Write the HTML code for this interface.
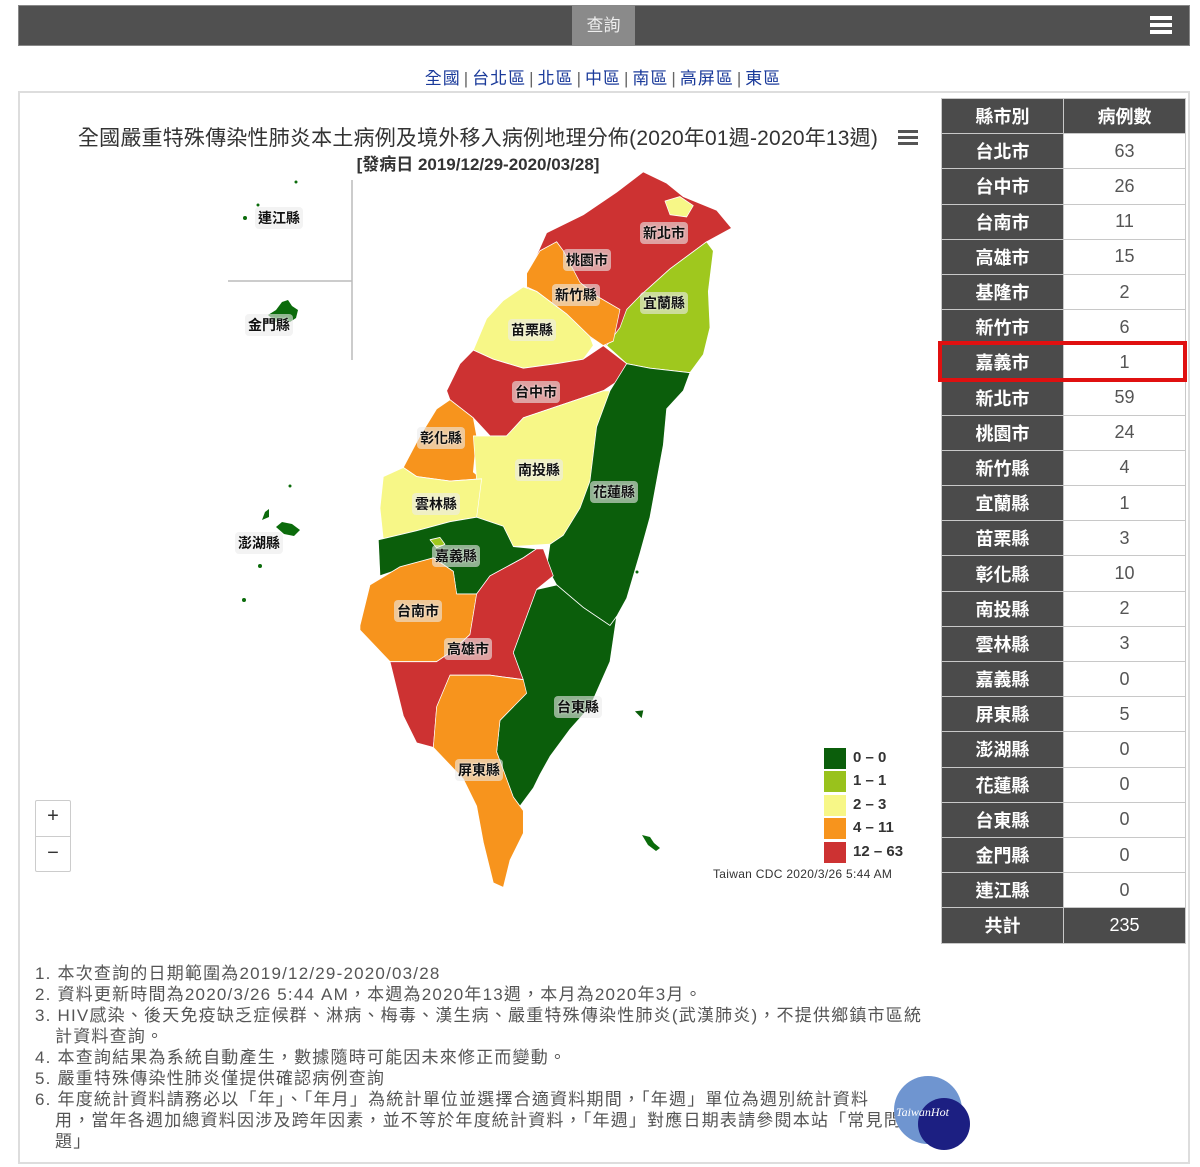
<!DOCTYPE html>
<html><head><meta charset="utf-8">
<style>
*{margin:0;padding:0;box-sizing:border-box}
body{width:1200px;height:1167px;background:#fff;font-family:"Liberation Sans","Noto Sans CJK TC",sans-serif;position:relative;overflow:hidden;color:#333}
.abs{position:absolute}
#bar{left:18px;top:5px;width:1172px;height:41px;background:#505050;border:1px solid #888}
#tab{left:572px;top:5px;width:63px;height:41px;background:#8a8a8a;color:#eee;font-size:17px;text-align:center;line-height:41px}
#links{left:0;top:64px;width:1206px;text-align:center;font-size:17px;color:#1a3a9a;letter-spacing:1px}
#links span{color:#666;margin:0 3px}
#panel{left:18px;top:91px;width:1172px;height:1073px;border:2px solid #ddd}
#title{left:60px;top:122px;width:836px;text-align:center;font-size:21px;color:#333;letter-spacing:.2px}
#sub{left:60px;top:150px;width:836px;text-align:center;font-size:17px;font-weight:bold;color:#333}
table{position:absolute;left:941px;top:98px;border-collapse:collapse;width:245px}
td{height:35.2px;border:1px solid #c8c8c8;text-align:center;font-size:18px;width:122px;padding:0}
td.k{background:#4b4b4b;color:#fff;font-weight:bold}
td.v{background:#fff;color:#555}
.lbl{position:absolute;font-size:14px;font-weight:bold;color:#111;transform:translate(-50%,-50%);background:rgba(235,235,235,.6);border-radius:4px;padding:1px 3px;white-space:nowrap;text-shadow:0 0 2px #fff}
.lg{position:absolute;left:824px;width:22px;height:21px}
.lt{position:absolute;left:853px;font-size:15px;font-weight:bold;color:#333}
#notes{left:35px;top:963px;font-size:17px;line-height:21px;color:#555;width:895px;letter-spacing:1.2px}
#notes div{padding-left:20px;text-indent:-20px}
</style></head><body>
<div id="bar" class="abs"></div>
<div id="tab" class="abs">查詢</div>
<div class="abs" style="left:1150px;top:16px;width:22px;height:4px;background:#fff;box-shadow:0 7px 0 #fff,0 14px 0 #fff"></div>
<div id="links" class="abs">全國<span>|</span>台北區<span>|</span>北區<span>|</span>中區<span>|</span>南區<span>|</span>高屏區<span>|</span>東區</div>
<div id="panel" class="abs"></div>
<div id="title" class="abs">全國嚴重特殊傳染性肺炎本土病例及境外移入病例地理分佈(2020年01週-2020年13週)</div>
<div id="sub" class="abs">[發病日 2019/12/29-2020/03/28]</div>
<div class="abs" style="left:898px;top:130px;width:20px;height:3px;background:#555;box-shadow:0 6px 0 #555,0 12px 0 #555"></div>

<svg class="abs" style="left:0;top:0" width="1200" height="1167">
<line x1="352" y1="180" x2="352" y2="360" stroke="#bbb" stroke-width="1.5"/>
<line x1="228" y1="281" x2="352" y2="281" stroke="#bbb" stroke-width="1.5"/>
<g fill="#0b6b0b">
<path d="M268 315 l8 -5 l6 -8 l6 -2 l4 6 l6 4 l-2 8 l-6 4 l-8 -2 l-6 2 z"/>
<circle cx="245" cy="218" r="2"/><circle cx="258" cy="205" r="1.5"/><circle cx="296" cy="182" r="1.5"/>
<path d="M276 527 l6 -5 l10 2 l8 6 l-6 6 l-10 -2 z"/><path d="M262 520 l3 -8 l4 -3 l0 8 z"/>
<circle cx="260" cy="566" r="2"/><circle cx="244" cy="600" r="2"/><circle cx="290" cy="486" r="1.5"/>
<path d="M642 835 l8 2 l4 6 l6 5 l-4 3 l-8 -6 z"/><circle cx="637" cy="572" r="1.5"/>
</g>
<g transform="translate(350,165) scale(0.3333,0.4515)" stroke="#fff" stroke-width="2" stroke-linejoin="round">
<polygon fill="#cd3232" points="530,250 590,150 700,110 800,60 880,15 950,40 1000,70 1100,100 1145,140 1070,170 960,230 870,290 830,330 800,400 760,400 530,300"/>
<polygon fill="#f7f787" points="945,80 990,70 1030,90 1010,115 960,110"/>
<polygon fill="#9fc81e" points="1070,170 1090,190 1075,280 1080,360 1060,420 1020,460 900,450 830,440 770,400 810,360 830,320 870,290 960,230"/>
<polygon fill="#f7941d" points="530,240 570,190 620,170 640,190 690,260 740,290 810,320 790,390 760,400 720,380 650,330 560,280 530,270"/>
<polygon fill="#f7f787" points="370,410 410,340 460,300 520,270 560,280 650,330 720,380 730,400 700,430 620,440 520,450 430,430"/>
<polygon fill="#cd3232" points="290,500 330,440 370,410 430,430 520,450 620,440 700,430 760,400 830,440 800,480 760,500 680,520 600,540 520,560 470,600 420,600 370,560 300,520"/>
<polygon fill="#f7941d" points="160,670 210,600 260,540 300,520 370,560 380,600 370,680 395,695 300,700 200,690"/>
<polygon fill="#f7f787" points="370,600 420,600 470,600 520,560 600,540 680,520 760,500 780,500 740,580 730,640 720,700 690,760 640,820 600,840 490,845 460,800 380,790 370,740 380,700"/>
<polygon fill="#0b5e0b" points="780,500 830,440 900,450 1020,460 1000,500 950,540 940,620 920,700 900,780 870,860 830,960 800,1000 780,1020 740,1000 700,980 620,930 590,890 600,840 640,820 690,760 720,700 740,580"/>
<polygon fill="#f7f787" points="100,690 160,670 200,690 300,700 395,695 380,780 300,790 200,810 100,830 90,760"/>
<polygon fill="#0b5e0b" points="85,830 200,810 300,790 380,780 460,800 490,845 560,850 520,870 420,910 380,950 320,950 310,900 250,870 90,910"/>
<polygon fill="#9fc81e" points="240,830 270,825 285,840 260,848"/>
<polygon fill="#f7941d" points="30,1020 60,930 150,890 250,870 310,900 320,950 380,950 360,1040 300,1080 260,1100 120,1100 30,1030"/>
<polygon fill="#cd3232" points="380,950 420,910 520,870 560,850 580,850 610,910 560,940 530,1000 490,1080 520,1140 420,1130 300,1130 260,1200 250,1290 200,1280 160,1220 120,1100 260,1100 300,1080 360,1040"/>
<polygon fill="#0b5e0b" points="560,940 620,930 700,980 780,1020 800,1000 780,1100 720,1200 660,1250 600,1310 570,1350 550,1380 510,1420 490,1400 440,1300 450,1230 490,1200 520,1140 490,1080 530,1000"/>
<polygon fill="#f7941d" points="260,1200 300,1130 420,1130 520,1140 530,1170 490,1200 450,1230 440,1300 490,1400 520,1430 520,1480 480,1540 460,1600 430,1590 400,1500 380,1420 340,1360 250,1290"/>
<polygon fill="#0b5e0b" stroke="none" points="855,1210 880,1208 875,1225"/>
</g>
</svg>

<div class="lbl" style="left:279px;top:218px">連江縣</div>
<div class="lbl" style="left:269px;top:325px">金門縣</div>
<div class="lbl" style="left:664px;top:233px">新北市</div>
<div class="lbl" style="left:587px;top:260px">桃園市</div>
<div class="lbl" style="left:576px;top:295px">新竹縣</div>
<div class="lbl" style="left:664px;top:303px">宜蘭縣</div>
<div class="lbl" style="left:532px;top:330px">苗栗縣</div>
<div class="lbl" style="left:536px;top:392px">台中市</div>
<div class="lbl" style="left:441px;top:438px">彰化縣</div>
<div class="lbl" style="left:539px;top:470px">南投縣</div>
<div class="lbl" style="left:614px;top:492px">花蓮縣</div>
<div class="lbl" style="left:436px;top:504px">雲林縣</div>
<div class="lbl" style="left:259px;top:543px">澎湖縣</div>
<div class="lbl" style="left:456px;top:556px">嘉義縣</div>
<div class="lbl" style="left:418px;top:611px">台南市</div>
<div class="lbl" style="left:468px;top:649px">高雄市</div>
<div class="lbl" style="left:578px;top:707px">台東縣</div>
<div class="lbl" style="left:479px;top:770px">屏東縣</div>

<div class="lg" style="top:748px;background:#0b5e0b"></div><div class="lt" style="top:749px">0 – 0</div>
<div class="lg" style="top:771px;background:#99c21c"></div><div class="lt" style="top:772px">1 – 1</div>
<div class="lg" style="top:795px;background:#f7f787"></div><div class="lt" style="top:796px">2 – 3</div>
<div class="lg" style="top:818px;background:#f7941d"></div><div class="lt" style="top:819px">4 – 11</div>
<div class="lg" style="top:842px;background:#cd3232"></div><div class="lt" style="top:843px">12 – 63</div>
<div class="abs" style="left:713px;top:867px;font-size:12px;color:#333;letter-spacing:.3px">Taiwan CDC 2020/3/26 5:44 AM</div>

<div class="abs" style="left:35px;top:800px;width:36px;height:72px;border:1px solid #ccc;border-radius:2px;background:#fff"></div>
<div class="abs" style="left:35px;top:836px;width:36px;height:1px;background:#ccc"></div>
<div class="abs" style="left:35px;top:805px;width:36px;text-align:center;font-size:20px;color:#333">+</div>
<div class="abs" style="left:35px;top:842px;width:36px;text-align:center;font-size:20px;color:#333">−</div>

<table>
<tr><td class="k">縣市別</td><td class="k">病例數</td></tr>
<tr><td class="k">台北市</td><td class="v">63</td></tr>
<tr><td class="k">台中市</td><td class="v">26</td></tr>
<tr><td class="k">台南市</td><td class="v">11</td></tr>
<tr><td class="k">高雄市</td><td class="v">15</td></tr>
<tr><td class="k">基隆市</td><td class="v">2</td></tr>
<tr><td class="k">新竹市</td><td class="v">6</td></tr>
<tr><td class="k">嘉義市</td><td class="v">1</td></tr>
<tr><td class="k">新北市</td><td class="v">59</td></tr>
<tr><td class="k">桃園市</td><td class="v">24</td></tr>
<tr><td class="k">新竹縣</td><td class="v">4</td></tr>
<tr><td class="k">宜蘭縣</td><td class="v">1</td></tr>
<tr><td class="k">苗栗縣</td><td class="v">3</td></tr>
<tr><td class="k">彰化縣</td><td class="v">10</td></tr>
<tr><td class="k">南投縣</td><td class="v">2</td></tr>
<tr><td class="k">雲林縣</td><td class="v">3</td></tr>
<tr><td class="k">嘉義縣</td><td class="v">0</td></tr>
<tr><td class="k">屏東縣</td><td class="v">5</td></tr>
<tr><td class="k">澎湖縣</td><td class="v">0</td></tr>
<tr><td class="k">花蓮縣</td><td class="v">0</td></tr>
<tr><td class="k">台東縣</td><td class="v">0</td></tr>
<tr><td class="k">金門縣</td><td class="v">0</td></tr>
<tr><td class="k">連江縣</td><td class="v">0</td></tr>
<tr><td class="k">共計</td><td class="k" style="font-weight:normal">235</td></tr>
</table>
<div class="abs" style="left:938px;top:341px;width:249px;height:41px;border:4px solid #e01010"></div>

<div id="notes" class="abs">
<div>1. 本次查詢的日期範圍為2019/12/29-2020/03/28</div>
<div>2. 資料更新時間為2020/3/26 5:44 AM，本週為2020年13週，本月為2020年3月。</div>
<div>3. HIV感染、後天免疫缺乏症候群、淋病、梅毒、漢生病、嚴重特殊傳染性肺炎(武漢肺炎)，不提供鄉鎮市區統計資料查詢。</div>
<div>4. 本查詢結果為系統自動產生，數據隨時可能因未來修正而變動。</div>
<div>5. 嚴重特殊傳染性肺炎僅提供確認病例查詢</div>
<div style="white-space:nowrap">6. 年度統計資料請務必以「年」、「年月」為統計單位並選擇合適資料期間，「年週」單位為週別統計資料<br>用，當年各週加總資料因涉及跨年因素，並不等於年度統計資料，「年週」對應日期表請參閱本站「常見問<br>題」</div>
</div>

<div class="abs" style="left:894px;top:1076px;width:68px;height:68px;border-radius:50%;background:#6f95d0"></div>
<div class="abs" style="left:918px;top:1098px;width:52px;height:52px;border-radius:50%;background:#1c1f82"></div>
<div class="abs" style="left:896px;top:1105px;font-size:12px;font-style:italic;color:#fff;font-family:'Liberation Serif',serif">TaiwanHot</div>
</body></html>
